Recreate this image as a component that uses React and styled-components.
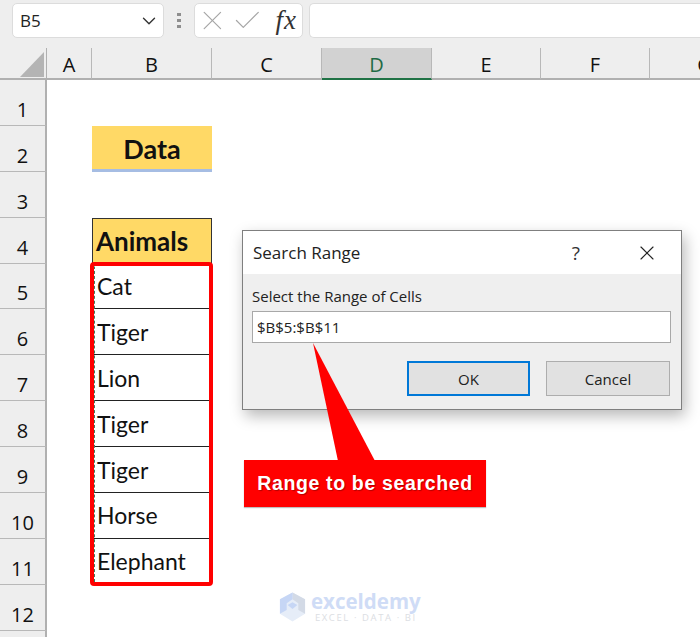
import React from "react";
import styled, { createGlobalStyle } from "styled-components";
import { X, Check, ChevronDown } from "lucide-react";

const COLUMNS = ["A", "B", "C", "D", "E", "F", "G"];
const ROW_HEIGHT = 45.9;
const ANIMALS = ["Cat", "Tiger", "Lion", "Tiger", "Tiger", "Horse", "Elephant"];

const Global = createGlobalStyle`
  html, body { margin: 0; padding: 0; background: #fff; }
`;

export default function App() {
  const rows = Array.from({ length: 12 }, (_, i) => i + 1);

  return (
    <Page>
      <Global />
      <FormulaBar>
        <NameBox>
          <span>B5</span>
          <ChevronDown size={22} strokeWidth={1.5} color="#333" />
        </NameBox>
        <Grip>
          <i /><i /><i />
        </Grip>
        <FxBox>
          <X size={33} strokeWidth={0.9} color="#a6a6a6" />
          <Check size={33} strokeWidth={0.9} color="#a6a6a6" />
          <FxLabel>fx</FxLabel>
        </FxBox>
        <FormulaInput />
      </FormulaBar>

      <Sheet>
        <Corner>
          <svg width="47" height="32" viewBox="0 0 47 32">
            <polygon points="44,4 44,29 20,29" fill="#b4b4b4" />
          </svg>
        </Corner>
        {COLUMNS.map((c) => (
          <ColHead key={c} $active={c === "D"}>{c}</ColHead>
        ))}

        {rows.map((r) => (
          <React.Fragment key={r}>
            <RowHead>{r}</RowHead>
            {COLUMNS.map((c) => {
              if (c === "B" && r === 2) return <DataCell key={c}>Data</DataCell>;
              if (c === "B" && r === 4) return <HeadCell key={c}>Animals</HeadCell>;
              if (c === "B" && r >= 5 && r <= 11)
                return <AnimalCell key={c}>{ANIMALS[r - 5]}</AnimalCell>;
              return <Cell key={c} />;
            })}
          </React.Fragment>
        ))}
        <RowHead />

        <SelectionFrame />
      </Sheet>

      <Dialog>
        <DialogTitle>
          <TitleText>Search Range</TitleText>
          <HelpMark>?</HelpMark>
          <X size={24} strokeWidth={1.1} color="#222" />
        </DialogTitle>
        <DialogBody>
          <FieldLabel>Select the Range of Cells</FieldLabel>
          <RangeField>$B$5:$B$11</RangeField>
          <ButtonRow>
            <DialogButton $primary>OK</DialogButton>
            <DialogButton>Cancel</DialogButton>
          </ButtonRow>
        </DialogBody>
      </Dialog>

      <Pointer width="70" height="120" viewBox="0 0 70 120">
        <polygon points="2,0 27,118 64,118" fill="#ff0000" />
      </Pointer>
      <Callout>Range to be searched</Callout>

      <Watermark>
        <svg width="29" height="32" viewBox="0 0 30 32">
          <polygon points="15,1 28,8 28,23 15,31 2,23 2,8" fill="#e6edf8" />
          <polygon points="15,1 28,8 28,23 21,19 21,12 15,8" fill="#d3dae6" />
          <polygon points="15,1 15,8 9,12 9,19 2,23 2,8" fill="#c6d6f5" />
          <polygon points="15,11 20,14 15,18 10,14" fill="#c6d6f5" />
        </svg>
        <WatermarkText>
          <strong>exceldemy</strong>
          <small>EXCEL · DATA · BI</small>
        </WatermarkText>
      </Watermark>
    </Page>
  );
}

const Page = styled.div`
  position: relative;
  width: 700px;
  height: 637px;
  overflow: hidden;
  background: #fff;
`;

const FormulaBar = styled.div`
  height: 48px;
  box-sizing: border-box;
  padding: 3px 0 0 12px;
  display: flex;
  align-items: flex-start;
  background: #eeeeee;
`;

const NameBox = styled.div`
  width: 152px;
  height: 35px;
  box-sizing: border-box;
  padding: 0 3px 0 7px;
  display: flex;
  align-items: center;
  justify-content: space-between;
  background: #fff;
  border: 1px solid #dcdcdc;
  border-radius: 5px;
  font: 17px "Open Sans", sans-serif;
  color: #222;
`;

const Grip = styled.div`
  width: 30px;
  height: 35px;
  display: flex;
  flex-direction: column;
  align-items: center;
  justify-content: center;
  gap: 3px;

  i {
    width: 4px;
    height: 3px;
    background: #8e8e8e;
  }
`;

const FxBox = styled.div`
  width: 109px;
  height: 35px;
  box-sizing: border-box;
  padding: 0 5px 0 1px;
  display: flex;
  align-items: center;
  gap: 2px;
  background: #fff;
  border: 1px solid #dcdcdc;
  border-radius: 5px;
`;

const FxLabel = styled.span`
  margin-left: 10px;
  font: italic 27px "Liberation Serif", serif;
  letter-spacing: 1px;
  color: #333;
`;

const FormulaInput = styled.div`
  flex: 1;
  height: 35px;
  margin-left: 6px;
  box-sizing: border-box;
  background: #fff;
  border: 1px solid #dcdcdc;
  border-right: 0;
  border-radius: 5px 0 0 5px;
`;

const Sheet = styled.div`
  position: relative;
  display: grid;
  grid-template-columns: 47px 45px 120px 110px 110px 109px 109px 110px;
  grid-auto-rows: ${ROW_HEIGHT}px;
  grid-template-rows: 32px;
`;

const Corner = styled.div`
  background: #eeeeee;
  border-right: 1px solid #b0b0b0;
  border-bottom: 2px solid #b0b0b0;
  box-sizing: border-box;
  overflow: hidden;
`;

const ColHead = styled.div`
  display: flex;
  align-items: center;
  justify-content: center;
  box-sizing: border-box;
  padding-top: 2px;
  background: ${(p) => (p.$active ? "#d2d2d2" : "#eeeeee")};
  color: ${(p) => (p.$active ? "#1f6b45" : "#111")};
  border-right: 1px solid #b8b8b8;
  border-bottom: 2px solid ${(p) => (p.$active ? "#1f7245" : "#b0b0b0")};
  font: 20px "Open Sans", sans-serif;
`;

const RowHead = styled.div`
  display: flex;
  align-items: flex-end;
  justify-content: center;
  box-sizing: border-box;
  padding-bottom: 2px;
  background: #eeeeee;
  border-right: 2px solid #b0b0b0;
  border-bottom: 1px solid #b8b8b8;
  font: 20px/1.3 "Open Sans", sans-serif;
  color: #111;
`;

const Cell = styled.div`
  background: #fff;
`;

const DataCell = styled.div`
  display: flex;
  align-items: center;
  justify-content: center;
  box-sizing: border-box;
  padding-top: 2px;
  background: #ffd966;
  border-bottom: 3px solid #a6bde3;
  font: bold 27px "Lato", sans-serif;
  color: #111;
`;

const HeadCell = styled.div`
  display: flex;
  align-items: center;
  box-sizing: border-box;
  padding-left: 3px;
  background: #ffd966;
  border: 1px solid #333;
  font: bold 26px "Lato", sans-serif;
  color: #111;
`;

const AnimalCell = styled.div`
  display: flex;
  align-items: center;
  box-sizing: border-box;
  padding-left: 5px;
  background: #fff;
  border-bottom: 1px solid #222;
  font: 23px "Lato", sans-serif;
  color: #111;
`;

const SelectionFrame = styled.div`
  position: absolute;
  left: 90px;
  top: 214px;
  width: 123px;
  height: 324px;
  box-sizing: border-box;
  border: 4px solid #ff0000;
  border-radius: 4px;

  &::before {
    content: "";
    position: absolute;
    inset: 0;
    border-top: 1px dashed #ffffff;
    border-left: 1px dashed #3f7d5c;
  }
`;

const Dialog = styled.div`
  position: absolute;
  left: 242px;
  top: 230px;
  width: 440px;
  height: 180px;
  box-sizing: border-box;
  display: flex;
  flex-direction: column;
  background: #efefef;
  border: 1px solid #7f7f7f;
  box-shadow: 3px 6px 14px rgba(0, 0, 0, 0.28);
`;

const DialogTitle = styled.div`
  height: 43px;
  box-sizing: border-box;
  padding: 0 22px 0 10px;
  display: flex;
  align-items: center;
  background: #fff;
`;

const TitleText = styled.div`
  flex: 1;
  font: 17px "Open Sans", sans-serif;
  color: #222;
`;

const HelpMark = styled.div`
  margin-right: 55px;
  font: 19px "Open Sans", sans-serif;
  color: #333;
`;

const DialogBody = styled.div`
  flex: 1;
  padding: 12px 10px 0 9px;
  display: flex;
  flex-direction: column;
`;

const FieldLabel = styled.div`
  font: 15px/20px "Open Sans", sans-serif;
  color: #222;
`;

const RangeField = styled.div`
  height: 32px;
  margin-top: 5px;
  box-sizing: border-box;
  padding-left: 4px;
  display: flex;
  align-items: center;
  background: #fff;
  border: 1px solid #a8a8a8;
  font: 15px "Open Sans", sans-serif;
  color: #222;
`;

const ButtonRow = styled.div`
  margin: 18px 1px 0 0;
  display: flex;
  justify-content: flex-end;
  gap: 16px;
`;

const DialogButton = styled.div`
  width: ${(p) => (p.$primary ? "123px" : "124px")};
  height: 35px;
  box-sizing: border-box;
  display: flex;
  align-items: center;
  justify-content: center;
  background: #e1e1e1;
  border: ${(p) => (p.$primary ? "2px solid #0078d7" : "1px solid #adadad")};
  font: 15px "Open Sans", sans-serif;
  color: #222;
`;

const Pointer = styled.svg`
  position: absolute;
  left: 311px;
  top: 343px;
`;

const Callout = styled.div`
  position: absolute;
  left: 244px;
  top: 460px;
  width: 242px;
  height: 47px;
  display: flex;
  align-items: center;
  justify-content: center;
  background: #ff0000;
  box-shadow: 0 1px 1px rgba(0, 0, 0, 0.25);
  font: bold 19.5px "Liberation Sans", sans-serif;
  letter-spacing: 0.65px;
  color: #fff;
  text-shadow: 1px 1px 1px rgba(0, 0, 0, 0.3);
`;

const Watermark = styled.div`
  position: absolute;
  left: 278px;
  top: 590px;
  display: flex;
  align-items: center;
  gap: 4px;
`;

const WatermarkText = styled.div`
  display: flex;
  flex-direction: column;

  strong {
    font: bold 20.5px/22px "Open Sans", sans-serif;
    color: #cfdcf6;
  }

  small {
    margin-top: 1px;
    font: 9.5px/10px "Open Sans", sans-serif;
    letter-spacing: 1.6px;
    color: #dcdee3;
    text-align: center;
  }
`;
